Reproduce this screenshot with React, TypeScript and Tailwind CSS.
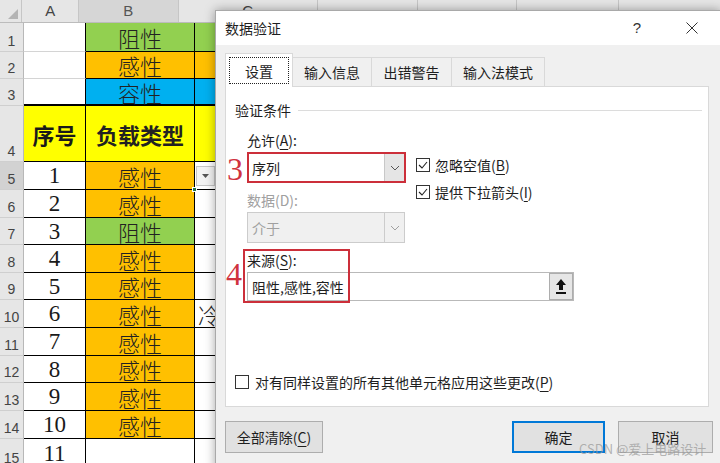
import React from "react";

const CJK = "font-['Noto_Sans_CJK_SC',sans-serif]";
const SERIF = "font-['Liberation_Serif',serif]";
const SANS = "font-['Liberation_Sans',sans-serif]";

type SheetRow = {
  n: number;
  h: string;
  a: string;
  b: string;
  fill: string;
  c: string;
  aLine: string;
};

const rows: SheetRow[] = [
  { n: 1, h: "h-[29px]", a: "", b: "阻性", fill: "bg-[#92d050]", c: "bg-[#92d050]", aLine: "border-b border-b-[#d4d4d4]" },
  { n: 2, h: "h-[27px]", a: "", b: "感性", fill: "bg-[#ffc000]", c: "bg-[#ffc000]", aLine: "border-b border-b-[#d4d4d4]" },
  { n: 3, h: "h-[27px]", a: "", b: "容性", fill: "bg-[#00b0f0]", c: "bg-[#00b0f0]", aLine: "border-b-2 border-b-black" },
  { n: 4, h: "h-[56px]", a: "序号", b: "负载类型", fill: "bg-[#ffff00]", c: "bg-[#ffff00]", aLine: "border-b border-b-black" },
  { n: 5, h: "h-[28px]", a: "1", b: "感性", fill: "bg-[#ffc000]", c: "bg-white", aLine: "border-b border-b-black" },
  { n: 6, h: "h-[28px]", a: "2", b: "感性", fill: "bg-[#ffc000]", c: "bg-white", aLine: "border-b border-b-black" },
  { n: 7, h: "h-[27px]", a: "3", b: "阻性", fill: "bg-[#92d050]", c: "bg-white", aLine: "border-b border-b-black" },
  { n: 8, h: "h-[28px]", a: "4", b: "感性", fill: "bg-[#ffc000]", c: "bg-white", aLine: "border-b border-b-black" },
  { n: 9, h: "h-[27px]", a: "5", b: "感性", fill: "bg-[#ffc000]", c: "bg-white", aLine: "border-b border-b-black" },
  { n: 10, h: "h-[28px]", a: "6", b: "感性", fill: "bg-[#ffc000]", c: "bg-white", aLine: "border-b border-b-black" },
  { n: 11, h: "h-[28px]", a: "7", b: "感性", fill: "bg-[#ffc000]", c: "bg-white", aLine: "border-b border-b-black" },
  { n: 12, h: "h-[27px]", a: "8", b: "感性", fill: "bg-[#ffc000]", c: "bg-white", aLine: "border-b border-b-black" },
  { n: 13, h: "h-[28px]", a: "9", b: "感性", fill: "bg-[#ffc000]", c: "bg-white", aLine: "border-b border-b-black" },
  { n: 14, h: "h-[28px]", a: "10", b: "感性", fill: "bg-[#ffc000]", c: "bg-white", aLine: "border-b border-b-black" },
  { n: 15, h: "h-[30px]", a: "11", b: "", fill: "bg-white", c: "bg-white", aLine: "border-b border-b-black" },
];

function Sheet() {
  return (
    <div className="flex flex-col">
      <div className={`flex h-[23px] bg-[#e6e6e6] border-b border-[#bcbcbc] text-[15px] text-[#444] ${SANS}`}>
        <div className="w-[24px] border-r border-[#c6c6c6] flex items-end justify-end pr-[3px] pb-[3px]">
          <svg width="10" height="10" viewBox="0 0 10 10">
            <polygon points="10,0 10,10 0,10" fill="#b4b4b4" />
          </svg>
        </div>
        <div className="w-[62px] border-r border-[#c6c6c6] flex items-center justify-center">A</div>
        <div className="w-[109px] border-r border-[#c6c6c6] bg-[#d6d6d6] flex items-center justify-center text-[#555]">B</div>
        <div className="w-[152px] border-r border-[#c6c6c6] flex items-center justify-center">C</div>
        <div className="w-[110px] border-r border-[#c6c6c6]" />
        <div className="w-[108px] border-r border-[#c6c6c6]" />
        <div className="w-[112px] border-r border-[#c6c6c6]" />
        <div className="w-[110px]" />
      </div>
      {rows.map((r) => (
        <div key={r.n} className={`flex ${r.h}`}>
          <div
            className={`w-[24px] shrink-0 border-r border-b border-r-[#b8b8b8] border-b-[#cfcfcf] flex items-end justify-center pb-[1px] text-[14px] leading-[18px] text-[#444] ${SANS} ${
              r.n === 5 ? "bg-[#d2d2d2]" : "bg-[#e6e6e6]"
            }`}
          >
            {r.n}
          </div>
          <div
            className={`w-[62px] shrink-0 border-r border-r-black ${r.aLine} ${r.n === 4 ? "bg-[#ffff00]" : "bg-white"} flex items-center justify-center text-[#1a1a1a] ${
              r.n === 4 ? `${CJK} font-bold text-[22px]` : `${SERIF} text-[23px]`
            } leading-none`}
          >
            {r.a}
          </div>
          <div
            className={`relative w-[109px] shrink-0 border-r border-b border-black ${
              r.n === 3 ? "border-b-2" : ""
            } ${r.fill} flex items-center justify-center text-[22px] leading-none text-[#222] ${CJK} ${
              r.n === 4 ? "font-bold" : "font-light"
            }`}
          >
            {r.b}
            {r.n === 5 && <div className="absolute right-[-3px] bottom-[-3px] w-[5px] h-[5px] bg-[#217346] border border-white z-10" />}
          </div>
          <div
            className={`w-[600px] shrink-0 border-b border-black ${r.n === 3 ? "border-b-2" : ""} ${r.c} flex items-center pl-[1px] text-[22px] leading-none text-[#222] ${CJK} font-light`}
          >
            {r.n === 5 && (
              <div className="w-[19px] h-[20px] bg-[#f3f3f3] border border-[#c6c6c6] flex items-center justify-center">
                <svg width="7" height="4" viewBox="0 0 7 4">
                  <polygon points="0,0 7,0 3.5,4" fill="#555" />
                </svg>
              </div>
            )}
            {r.n === 10 && <span className="pl-[2px]">冷</span>}
          </div>
        </div>
      ))}
    </div>
  );
}

function Check({ checked }: { checked: boolean }) {
  return (
    <span className="w-[14px] h-[14px] border border-[#333] bg-white flex items-center justify-center shrink-0">
      {checked && (
        <svg width="10" height="8" viewBox="0 0 10 8">
          <polyline points="1,4 4,7 9,1" fill="none" stroke="#222" strokeWidth="1.1" />
        </svg>
      )}
    </span>
  );
}

function Chevron({ color }: { color: string }) {
  return (
    <svg width="10" height="6" viewBox="0 0 10 6">
      <polyline points="1,1 5,5 9,1" fill="none" stroke={color} strokeWidth="1" />
    </svg>
  );
}

function U({ children }: { children: React.ReactNode }) {
  return <span className="underline underline-offset-[3px] decoration-1">{children}</span>;
}

function Dialog() {
  return (
    <div
      className={`absolute left-[215px] top-[10px] w-[506px] h-[460px] border border-[#a9a9a9] bg-[#f0f0f0] shadow-[0_0_10px_rgba(0,0,0,0.35)] flex flex-col text-[14px] text-[#1e1e1e] ${CJK}`}
    >
      <div className="h-[34px] bg-white flex items-center pl-[9px] shrink-0">
        <span className="leading-[20px]">数据验证</span>
        <span className="flex-1" />
        <span className={`w-[20px] text-center text-[15px] ${SANS} text-[#333]`}>?</span>
        <span className="w-[20px] ml-[35px] mr-[18px] flex items-center justify-center">
          <svg width="12" height="12" viewBox="0 0 12 12">
            <line x1="0.5" y1="0.5" x2="11.5" y2="11.5" stroke="#333" strokeWidth="1" />
            <line x1="11.5" y1="0.5" x2="0.5" y2="11.5" stroke="#333" strokeWidth="1" />
          </svg>
        </span>
      </div>

      <div className="pl-[9px] pr-[10px] pt-[8px] flex flex-col">
        <div className="flex items-end h-[33px]">
          <div className="relative z-10 -mb-px w-[68px] h-[34px] bg-white border-x border-t border-[#d9d9d9] p-[3px]">
            <div className="w-full h-full border border-dotted border-[#222] flex items-center justify-center leading-[20px]">
              设置
            </div>
          </div>
          <div className="w-[79px] h-[29px] border-t border-r border-[#d9d9d9] flex items-center justify-center leading-[20px]">
            输入信息
          </div>
          <div className="w-[80px] h-[29px] border-t border-r border-[#d9d9d9] flex items-center justify-center leading-[20px]">
            出错警告
          </div>
          <div className="w-[93px] h-[29px] border-t border-r border-[#d9d9d9] flex items-center justify-center leading-[20px]">
            输入法模式
          </div>
        </div>

        <div className="relative w-[484px] h-[321px] bg-white border border-[#d9d9d9] leading-[20px]">
          <div className="pt-[13px] pl-[9px] flex items-center">
            <span>验证条件</span>
            <span className="flex-1 h-px bg-[#dcdcdc] ml-[7px] mr-[6px]" />
          </div>

          <div className="pl-[21px] mt-[10px]">
            <div className="flex">
              <div className="w-[159px] flex flex-col">
                <div className="h-[20px]">
                  允许(<U>A</U>):
                </div>
                <div className="mt-[2px] h-[31px] border-2 border-[#cc2f3a] bg-white flex items-center">
                  <span className="pl-[3px]">序列</span>
                  <span className="ml-auto w-[20px] h-full bg-[#e5e5e5] border-l border-[#c8c8c8] flex items-center justify-center">
                    <Chevron color="#555" />
                  </span>
                </div>
                <div className="mt-[7px] h-[20px] text-[#a0a0a0]">数据(D):</div>
                <div className="mt-[2px] w-[158px] h-[31px] border border-[#cccccc] bg-[#f0f0f0] flex items-center">
                  <span className="pl-[4px] text-[#a0a0a0]">介于</span>
                  <span className="ml-auto w-[20px] h-[29px] border-l border-[#cccccc] flex items-center justify-center">
                    <Chevron color="#a0a0a0" />
                  </span>
                </div>
              </div>
              <div className="ml-[10px] pt-[25px] flex flex-col gap-[7px]">
                <div className="h-[20px] flex items-center gap-[5px]">
                  <Check checked />
                  <span>
                    忽略空值(<U>B</U>)
                  </span>
                </div>
                <div className="h-[20px] flex items-center gap-[5px]">
                  <Check checked />
                  <span>
                    提供下拉箭头(<U>I</U>)
                  </span>
                </div>
              </div>
            </div>

            <div className="mt-[7px] h-[20px]">
              来源(<U>S</U>):
            </div>
            <div className="mt-[2px] w-[327px] h-[29px] border border-[#b9b9b9] bg-white flex items-center">
              <span className="pl-[4px]">阻性,感性,容性</span>
              <span className="ml-auto w-[24px] h-[27px] bg-[#e6e6e6] border border-[#adadad] flex items-center justify-center">
                <svg width="12" height="17" viewBox="0 0 12 17">
                  <polygon points="6,1 11,7 8,7 8,12 4,12 4,7 1,7" fill="#111" />
                  <rect x="1" y="14" width="10" height="2" fill="#111" />
                </svg>
              </span>
            </div>
          </div>

          <div className="mt-[71px] pl-[9px] h-[20px] flex items-center gap-[6px]">
            <Check checked={false} />
            <span>
              对有同样设置的所有其他单元格应用这些更改(<U>P</U>)
            </span>
          </div>

          <div className="absolute left-[17px] top-[162px] w-[107px] h-[54px] border-2 border-[#cc2f3a]" />
          <span className={`absolute left-[1px] top-[66px] text-[32px] leading-none text-[#d0333f] ${SERIF}`}>3</span>
          <span className={`absolute left-0 top-[171px] text-[32px] leading-none text-[#d0333f] ${SERIF}`}>4</span>
        </div>

        <div className="mt-[14px] w-[488px] flex">
          <div className="w-[98px] h-[32px] border border-[#adadad] bg-[#e1e1e1] flex items-center justify-center">
            全部清除(<U>C</U>)
          </div>
          <div className="ml-auto w-[93px] h-[32px] border-2 border-[#0078d7] bg-[#e1e1e1] flex items-center justify-center">
            确定
          </div>
          <div className="ml-[13px] w-[95px] h-[32px] border border-[#adadad] bg-[#e1e1e1] flex items-center justify-center">
            取消
          </div>
        </div>
      </div>
    </div>
  );
}

export default function App() {
  return (
    <div className="relative w-[720px] h-[463px] overflow-hidden bg-white">
      <Sheet />
      <Dialog />
      <span className={`absolute left-[579px] top-[440px] text-[13px] leading-[18px] text-[rgba(150,150,150,0.7)] ${CJK}`}>
        CSDN @爱上电路设计
      </span>
    </div>
  );
}
